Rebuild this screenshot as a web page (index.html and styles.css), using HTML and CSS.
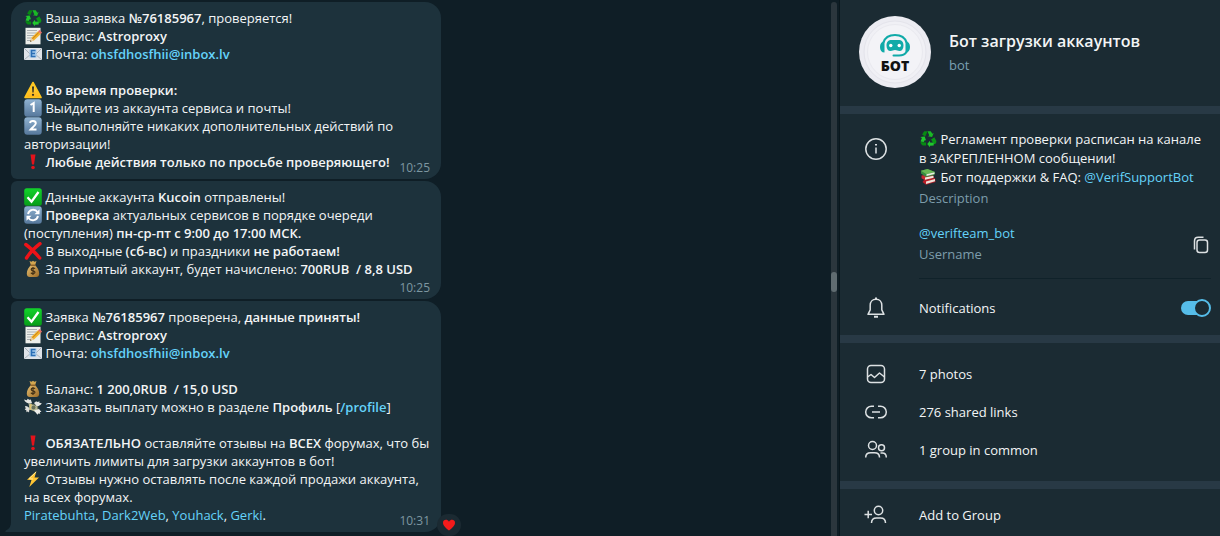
FILE: index.html
```html
<!DOCTYPE html>
<html lang="ru">
<head>
<meta charset="utf-8">
<title>Бот загрузки аккаунтов</title>
<link rel="stylesheet" href="styles.css">
</head>
<body>
<svg class="sprite" aria-hidden="true">
  <defs>
    <linearGradient id="blue" x1="0" y1="0" x2="0" y2="1"><stop offset="0" stop-color="#8fb2d0"/><stop offset="1" stop-color="#56789c"/></linearGradient>
    <linearGradient id="green" x1="0" y1="0" x2="0" y2="1"><stop offset="0" stop-color="#12d32b"/><stop offset="1" stop-color="#079c19"/></linearGradient>
    <linearGradient id="yellow" x1="0" y1="0" x2="0" y2="1"><stop offset="0" stop-color="#ffe14a"/><stop offset="1" stop-color="#ffb31a"/></linearGradient>
    <linearGradient id="bag" x1="0" y1="0" x2="1" y2="1"><stop offset="0" stop-color="#e6c072"/><stop offset="1" stop-color="#9c6a25"/></linearGradient>
  </defs>
  <symbol id="recycle" viewBox="0 0 18 18">
    <path d="M5.2 1.3h3.4L6.2 6.4 3.1 4.6z" fill="#078a12"/>
    <path d="M8.5 1.2h3.2l1.7 2.5 1.3-.7-1.6 4-4.2-.8 1.4-.8z" fill="#19b925"/>
    <path d="M15.3 7.3l2.1 3.8c.2 1.9-.8 3-2.6 3.2l-2.7-4.8z" fill="#0a9717"/>
    <path d="M14.7 12.7v2.8l-3.7.2v1.5L8.2 13.9l2.8-3.2v1.8z" fill="#20c82d"/>
    <path d="M1.3 7.1l4.3-.5 1.5 4-1.2-.6-1.2 2.1-3.1-.5 1.3-3.6z" fill="#20c82d"/>
    <path d="M1.4 11.9l5.7.5v3.2H4.2c-1.5 0-2.4-2.3-2.8-3.7z" fill="#078a12"/>
  </symbol>
  <symbol id="memo" viewBox="0 0 18 18">
    <path d="M1.5 0.8h15v16.5h-15z" fill="#eceeea"/>
    <path d="M3 3.5h10M3 6h12M3 8.5h8M3 11h7M3 13.5h5" stroke="#a9afb1" stroke-width="1"/>
    <path d="M6 14.8l1.4-4L14 4.2l2.8 2.7-6.9 6.6z" fill="#f5b52c"/>
    <path d="M7.7 12.6l7.2-7.2" stroke="#bf7719" stroke-width="1"/>
    <path d="M14 4.2l1.5-1.3 2.6 2.6-1.3 1.4z" fill="#e66e68"/>
    <path d="M6 14.8l1.4-4 2.5 2.7z" fill="#e9cda2"/><path d="M6 14.8l.5-1.5 1 1z" fill="#333"/>
  </symbol>
  <symbol id="mail" viewBox="0 0 18 18">
    <rect x="0" y="3" width="18" height="12" rx="1" fill="#dee3e8"/>
    <path d="M.5 14.5L7 9M17.5 14.5L11 9M.5 3.5L7 10h4l6.500-6.500" stroke="#a8b1ba" fill="none"/>
    <rect x="5.500" y="4.500" width="7" height="8" fill="#a4caec"/>
    <path d="M11.500 5.500h-4v6h4M7.500 8.500h3.500" stroke="#2b6fb5" stroke-width="1.500" fill="none"/>
  </symbol>
  <symbol id="warning" viewBox="0 0 18 18">
    <path d="M9 1.500L17 16.500H1z" fill="url(#yellow)" stroke="#ffc51e" stroke-width="1.600" stroke-linejoin="round"/>
    <path d="M8 5.500h2l-.4 6H8.400z" fill="#2d2924"/><circle cx="9" cy="13.800" r="1.100" fill="#2d2924"/>
  </symbol>
  <symbol id="one" viewBox="0 0 18 18">
    <rect x=".3" y=".3" width="17.400" height="17.400" rx="3" fill="url(#blue)"/>
    <path d="M6.500 6L9.700 4v9" stroke="#fff" stroke-width="2" fill="none"/>
  </symbol>
  <symbol id="two" viewBox="0 0 18 18">
    <rect x=".3" y=".3" width="17.400" height="17.400" rx="3" fill="url(#blue)"/>
    <path d="M6 6c.5-3 6-2.500 5.800.5C11.700 8.500 8.500 10 6.500 12.500H12.500" stroke="#fff" stroke-width="1.900" fill="none"/>
  </symbol>
  <symbol id="exclaim" viewBox="0 0 18 18">
    <path d="M6.500 1.500h5L10 11.500H8z" fill="#e3131b"/><circle cx="9" cy="14.500" r="1.800" fill="#e3131b"/>
  </symbol>
  <symbol id="check" viewBox="0 0 18 18">
    <rect x=".2" y=".2" width="17.600" height="17.600" rx="2.500" fill="url(#green)"/>
    <path d="M3.500 9.200l4 4.500L14.500 4" stroke="#fff" stroke-width="2.300" fill="none"/>
  </symbol>
  <symbol id="refresh" viewBox="0 0 18 18">
    <rect x=".2" y=".2" width="17.600" height="17.600" rx="3" fill="url(#blue)"/>
    <path d="M4 8a5.300 5.300 0 0 1 9.500-2M14 10a5.300 5.300 0 0 1-9.500 2" stroke="#fff" stroke-width="1.900" fill="none"/>
    <path d="M15.500 3.200v5h-5zM2.500 14.800v-5h5z" fill="#fff"/>
  </symbol>
  <symbol id="cross" viewBox="0 0 18 18">
    <path d="M1.800 2.500C6 5.500 11 10.500 15.700 16M16 1.700C11 5.500 6 10.500 2.500 16" stroke="#ee1318" stroke-width="3.400" stroke-linecap="round" fill="none"/>
  </symbol>
  <symbol id="money" viewBox="0 0 18 18">
    <path d="M5.500 1l2 .7L9 .8l1.500.9 2-.7-1.500 4.500H7z" fill="#d2a650"/>
    <path d="M7 5h4c2.500 2.500 4.200 5.500 4.200 8.500 0 2.500-1.200 3.500-3 3.500H5.800c-1.800 0-3-1-3-3.500C2.800 10.500 4.500 7.500 7 5z" fill="url(#bag)"/>
    <path d="M6.500 5.200h5" stroke="#80531e" stroke-width="1.200"/>
    <path d="M11 8.800c-.5-1-3.800-1-3.800.7s3.800 1 3.800 2.700-3.500 1.700-4 .5M9 7v8" stroke="#443217" stroke-width="1.200" fill="none"/>
  </symbol>
  <symbol id="wings" viewBox="0 0 18 18">
    <path d="M4.500 5L13.500 8l1 7-9-3.500z" fill="#bab994"/>
    <path d="M4.500 5L13.500 8l1 7" stroke="#6f785d" fill="none"/>
    <circle cx="9.500" cy="9.500" r="2" fill="#68715b"/><path d="M7 6l-1 6" stroke="#dfc36d" stroke-width="1.500"/>
    <path d="M6 5.500C3.500 5.500.8 4 0 1.500l3 .7L3.500.8 6 2l.7-.8L8 5z" fill="#e5e6e2"/>
    <path d="M10 5l2.500-2 .2 1 3-.5-.5 1.300 2.600.5c-1.300 2.200-3.500 3.200-5.300 2.700z" fill="#e5e6e2"/>
    <path d="M1 8l2 .3L5.500 10 5 14.500l-1.200-1-1.300.7-.2-2L.7 11.500l1-1z" fill="#dedfdb"/>
    <path d="M10 12.500l5-1.500 2.500 3-1.700.1.500 1.700-2-.4-.8 1.300z" fill="#eeeeea"/>
  </symbol>
  <symbol id="bolt" viewBox="0 0 18 18">
    <path d="M12.500 1L3 9.800l4.500.2-2.200 7L15 7.600l-4.500-.2z" fill="#ffc533"/>
    <path d="M12 2L5 8.700l4 .3" stroke="#ffe894" fill="none"/>
  </symbol>
  <symbol id="books" viewBox="0 0 18 18">
    <path d="M5 12l11-2 .5 4-9.500 2.800L3.500 14z" fill="#b91e28"/><path d="M7 13.500l9-2.500v2.300l-9 2.700z" fill="#ece2d8"/>
    <path d="M2.500 7.500l11-1.500 1.500 4.300-9 2-3.500-2z" fill="#c62931"/><path d="M6 9.500l8.500-1.700v2L6 11.700z" fill="#f1e8dc"/>
    <path d="M2 2.800L8.500 1l7.500 3-.5 3-8.500 2L2 5.500z" fill="#378c40"/><path d="M2 2.800L8.500 1l7.500 3-8.500 2.300z" fill="#69b755"/><path d="M7.500 6.300l8-2V6l-8 2z" fill="#e9eee0"/>
  </symbol>
</svg>

<div class="app">
  <main class="chat">
    <article class="bubble bubble-first">
      <p class="text">
        <svg class="emoji"><use href="#recycle"/></svg> Ваша заявка <b>№76185967</b>, проверяется!<br>
        <svg class="emoji"><use href="#memo"/></svg> Сервис: <b>Astroproxy</b><br>
        <svg class="emoji"><use href="#mail"/></svg> Почта: <a href="mailto:ohsfdhosfhii@inbox.lv"><b>ohsfdhosfhii@inbox.lv</b></a><br>
        <br>
        <svg class="emoji"><use href="#warning"/></svg> <b>Во время проверки:</b><br>
        <svg class="emoji"><use href="#one"/></svg> Выйдите из аккаунта сервиса и почты!<br>
        <svg class="emoji"><use href="#two"/></svg> Не выполняйте никаких дополнительных действий по<br>
        авторизации!<br>
        <svg class="emoji"><use href="#exclaim"/></svg><b> Любые действия только по просьбе проверяющего!</b>
      </p>
      <time class="time">10:25</time>
    </article>

    <article class="bubble">
      <p class="text">
        <svg class="emoji"><use href="#check"/></svg> Данные аккаунта <b>Kucoin</b> отправлены!<br>
        <svg class="emoji"><use href="#refresh"/></svg> <b>Проверка</b> актуальных сервисов в порядке очереди<br>
        (поступления) <b>пн-ср-пт с 9:00 до 17:00 МСК.</b><br>
        <svg class="emoji"><use href="#cross"/></svg> В выходные <b>(сб-вс)</b> и праздники <b>не работаем!</b><br>
        <svg class="emoji"><use href="#money"/></svg> За принятый аккаунт, будет начислено: <b>700RUB&nbsp; / 8,8 USD</b>
      </p>
      <time class="time time-own-line">10:25</time>
    </article>

    <article class="bubble bubble-last">
      <p class="text">
        <svg class="emoji"><use href="#check"/></svg> Заявка <b>№76185967</b> проверена, <b>данные приняты!</b><br>
        <svg class="emoji"><use href="#memo"/></svg> Сервис: <b>Astroproxy</b><br>
        <svg class="emoji"><use href="#mail"/></svg> Почта: <a href="mailto:ohsfdhosfhii@inbox.lv"><b>ohsfdhosfhii@inbox.lv</b></a><br>
        <br>
        <svg class="emoji"><use href="#money"/></svg> Баланс: <b>1 200,0RUB&nbsp; / 15,0 USD</b><br>
        <svg class="emoji"><use href="#wings"/></svg> Заказать выплату можно в разделе <b>Профиль</b> [<a href="#profile"><b>/profile</b></a>]<br>
        <br>
        <svg class="emoji"><use href="#exclaim"/></svg> <b>ОБЯЗАТЕЛЬНО</b> оставляйте отзывы на <b>ВСЕХ</b> форумах, что бы<br>
        увеличить лимиты для загрузки аккаунтов в бот!<br>
        <svg class="emoji"><use href="#bolt"/></svg> Отзывы нужно оставлять после каждой продажи аккаунта,<br>
        на всех форумах.<br>
        <a href="#piratebuhta">Piratebuhta</a>, <a href="#dark2web">Dark2Web</a>, <a href="#youhack">Youhack</a>, <a href="#gerki">Gerki</a>.
      </p>
      <time class="time">10:31</time>
      <svg class="tail" viewBox="0 0 12 16"><path d="M6 0h6v16H1c-1 0-1-1 0-1.500C4.500 13 6 10 6 6z"/></svg>
      <button class="reaction" type="button" aria-label="Reaction">
        <svg viewBox="0 0 14 14"><path d="M7 12.500C4.500 10.500 1 7.800 1 4.700 1 1.500 5.300.8 7 3.700 8.700.8 13 1.500 13 4.700c0 3.100-3.500 5.800-6 7.800z" fill="#f51b1b"/></svg>
      </button>
    </article>
  </main>

  <div class="scrollbar"><div class="thumb"></div></div>

  <aside class="panel">
    <header class="profile">
      <svg class="avatar" viewBox="0 0 72 72">
        <circle cx="36" cy="36" r="36" fill="#ececf2"/>
        <circle cx="36" cy="36" r="31" fill="#f0f0f5" stroke="#e4e4eb"/>
        <circle cx="36" cy="36" r="27.500" fill="#f3f3f7" stroke="#e9e9ef"/>
        <path d="M24.500 26.500C26 21.500 30 19 36 19s10 2.500 11.500 7.500" fill="none" stroke="#10aaa8" stroke-width="2.200"/>
        <path d="M25.500 25.500v11c-3 0-4.500-2-4.500-5.500s1.500-5.500 4.500-5.500zM46.500 25.500v11c3 0 4.500-2 4.500-5.500s-1.500-5.500-4.500-5.500z" fill="#10aaa8"/>
        <path d="M33 24h6c4 0 5.500 2 5.500 5.500s-1.500 5.500-4 5.500c-2 0-2.500-1-4.500-1s-2.500 1-4.500 1c-2.500 0-4-2-4-5.500S29 24 33 24z" fill="#10aaa8"/>
        <circle cx="31.800" cy="29.500" r="1.700" fill="#fff"/><circle cx="40.200" cy="29.500" r="1.700" fill="#fff"/>
        <path d="M47.500 36c-1.500 2.500-4 3.500-7.500 3.500h-5.500" fill="none" stroke="#10aaa8" stroke-width="2" stroke-linecap="round"/>
        <text class="avatar-text" x="36" y="55" text-anchor="middle">БОТ</text>
      </svg>
      <div class="names">
        <h1 class="title">Бот загрузки аккаунтов</h1>
        <p class="subtitle">bot</p>
      </div>
    </header>

    <section class="section info">
      <svg class="icon" viewBox="0 0 24 24"><circle cx="12" cy="12" r="10.200"/><path d="M12 10.500v6"/><path d="M12 7v1.600" stroke-width="2"/></svg>
      <div class="description">
        <p class="copy"><svg class="emoji"><use href="#recycle"/></svg> Регламент проверки расписан на канале<br>в ЗАКРЕПЛЕННОМ сообщении!<br><svg class="emoji"><use href="#books"/></svg> Бот поддержки &amp; FAQ: <a href="#verifsupportbot">@VerifSupportBot</a></p>
        <p class="caption">Description</p>
      </div>
      <div class="username">
        <div>
          <p class="copy"><a href="#verifteam_bot">@verifteam_bot</a></p>
          <p class="caption">Username</p>
        </div>
        <button class="icon-button" type="button" aria-label="Copy">
          <svg class="icon" viewBox="0 0 24 24"><rect x="8" y="7" width="10.500" height="12.500" rx="2.500"/><path d="M5.500 16.500V8c0-2.500 1.200-3.700 3.700-3.700h5.300"/></svg>
        </button>
      </div>
      <hr class="rule">
      <label class="notify" for="notifications">
        <svg class="icon" viewBox="0 0 24 24"><path d="M12 3.300c-3.600 0-5.800 2.500-5.800 6v4.500L4 18.300h16l-2.200-4.500V9.300c0-3.500-2.200-6-5.800-6z" stroke-linejoin="round"/><path d="M12 1.500v2M10 20.800h4" stroke-width="2"/></svg>
        <span>Notifications</span>
        <input class="toggle" id="notifications" type="checkbox" checked>
      </label>
    </section>

    <section class="section list">
      <button class="row" type="button">
        <svg class="icon" viewBox="0 0 24 24"><rect x="3.500" y="3.500" width="17" height="17" rx="3.500"/><path d="M3.500 15l3.500-2.500 3.500 3 5-4.500 5 4" stroke-linejoin="round"/></svg>
        <span>7 photos</span>
      </button>
      <button class="row" type="button">
        <svg class="icon" viewBox="0 0 24 24"><path d="M10 6.200H7.500a5.800 5.800 0 0 0 0 11.600H10M14 6.200h2.500a5.800 5.800 0 0 1 0 11.600H14M8 12h8"/></svg>
        <span>276 shared links</span>
      </button>
      <button class="row" type="button">
        <svg class="icon" viewBox="0 0 24 24"><circle cx="8.500" cy="7.500" r="4"/><circle cx="17.500" cy="9.700" r="3"/><path d="M1.700 19.500c0-3.300 1.800-4.700 5-4.700h3.800c3.200 0 5 1.400 5 4.700M16.500 15h1.800c2.500 0 4 1.500 4 4.500"/></svg>
        <span>1 group in common</span>
      </button>
    </section>

    <section class="section actions">
      <button class="row" type="button">
        <svg class="icon" viewBox="0 0 24 24"><circle cx="14.500" cy="7.500" r="4.200"/><path d="M7.500 20c0-3.500 1.800-5 5-5h4c3.200 0 5 1.500 5 5M.5 11.500h7.500M4.200 7.700v7.600"/></svg>
        <span>Add to Group</span>
      </button>
    </section>
  </aside>
</div>
</body>
</html>
```

FILE: styles.css
```css
*,
*::before,
*::after {
  box-sizing: border-box;
}

body {
  margin: 0;
  background: #0f1e26;
  color: #f3f5f6;
  font: 13px/18px "Open Sans", "Noto Sans", sans-serif;
}

p, h1 {
  margin: 0;
}

a {
  color: #65d3fa;
  text-decoration: none;
}

b {
  font-weight: 600;
}

button {
  padding: 0;
  border: 0;
  background: none;
  color: inherit;
  font: inherit;
  text-align: left;
  cursor: pointer;
}

.sprite {
  position: absolute;
  width: 0;
  height: 0;
}

.app {
  display: grid;
  grid-template-columns: minmax(0, 1fr) 6px 383px;
  min-height: 100vh;
}

/* Conversation */
.chat {
  display: flex;
  flex-direction: column;
  align-items: flex-start;
  gap: 2px;
  padding: 2px 11px;
}

.bubble {
  position: relative;
  width: 100%;
  max-width: 430px;
  padding: 7px 11px 2px 13px;
  border-radius: 6px 16px 16px 6px;
  background: #1d323c;
}

.bubble-first {
  border-top-left-radius: 16px;
}

.bubble-last {
  border-bottom-left-radius: 0;
}

.emoji {
  width: 18px;
  height: 18px;
  vertical-align: top;
}

.time {
  display: block;
  margin-top: -12px;
  color: #7d97a1;
  font-size: 12px;
  text-align: right;
}

.time-own-line {
  margin-top: 1px;
}

.tail {
  position: absolute;
  bottom: 0;
  left: -6px;
  width: 12px;
  height: 16px;
  fill: #1d323c;
}

.reaction {
  position: absolute;
  right: -20px;
  bottom: -4px;
  display: grid;
  place-items: center;
  width: 24px;
  height: 22px;
  border-radius: 11px;
  background: #1b2a32;
}

.reaction svg {
  width: 14px;
  height: 14px;
}

.scrollbar {
  margin-top: 2px;
  padding-top: 270px;
  border-radius: 3px 3px 0 0;
  background: #2b363d;
}

.thumb {
  height: 20px;
  border-radius: 3px;
  background: #606c71;
}

/* Profile panel */
.panel {
  margin-left: 2px;
  border-left: 1px solid #0a171d;
  background: #1b2b33;
}

.profile {
  display: flex;
  align-items: center;
  gap: 18px;
  padding: 16px 19px 18px;
}

.avatar {
  width: 72px;
  height: 72px;
}

.avatar-text {
  fill: #111;
  font-size: 14px;
  font-weight: 800;
}

.names {
  padding-top: 2px;
}

.title {
  font-size: 16px;
  font-weight: 600;
  line-height: 24px;
}

.subtitle {
  color: #7aa0b4;
  line-height: 24px;
}

.section {
  border-top: 8px solid #283945;
}

.icon {
  width: 24px;
  height: 24px;
  fill: none;
  stroke: #dde1e3;
  stroke-width: 1.5;
}

.info {
  display: grid;
  grid-template-columns: 24px 1fr;
  column-gap: 31px;
  padding: 16px 9px 9px 24px;
}

.info > .icon {
  margin-top: 7px;
}

.copy {
  line-height: 19px;
}

.caption {
  color: #7d9dab;
  line-height: 22px;
}

.username {
  grid-column: 2;
  display: flex;
  justify-content: space-between;
  align-items: center;
  margin-top: 15px;
}

.icon-button {
  display: flex;
  margin-right: -2px;
}

.rule {
  grid-column: 2;
  width: 100%;
  height: 1px;
  margin: 13px 0 10px;
  border: 0;
  background: #10222a;
}

.notify {
  grid-column: 1 / -1;
  display: grid;
  grid-template-columns: 24px 1fr auto;
  align-items: center;
  column-gap: 31px;
  height: 37px;
}

.toggle {
  position: relative;
  width: 30px;
  height: 18px;
  margin: 0;
  appearance: none;
}

.toggle::before {
  content: "";
  position: absolute;
  inset: 2px 2px 2px 0;
  border-radius: 7px;
  background: #56bde9;
}

.toggle::after {
  content: "";
  position: absolute;
  top: 0;
  right: 0;
  width: 18px;
  height: 18px;
  border: 2px solid #56bde9;
  border-radius: 50%;
  background: #1b2b33;
}

.list {
  padding: 12px 0;
}

.actions {
  padding-top: 7px;
}

.row {
  display: flex;
  align-items: center;
  gap: 31px;
  width: 100%;
  height: 38px;
  padding: 0 24px;
}
```
